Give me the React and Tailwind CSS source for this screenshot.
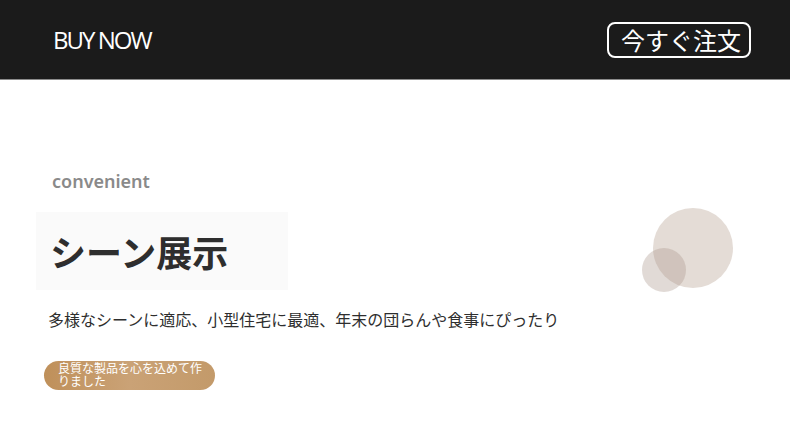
import React from "react";

export default function App() {
  const jp = { fontFamily: '"Noto Sans CJK JP", "Noto Sans", sans-serif' };
  return (
    <div className="w-[790px] h-[441px] bg-white overflow-hidden relative" style={jp}>
      <header className="h-[80px] bg-[#1b1b1b] border-b border-[#8c8c8c] flex items-center justify-between pl-[53px] pr-[39px]">
        <div
          className="text-white text-[24px] tracking-[-2px] leading-none"
          style={{ fontFamily: '"Open Sans", sans-serif' }}
        >
          BUY NOW
        </div>
        <div className="w-[144px] h-[36px] border-2 border-white rounded-[8px] flex items-center justify-center pl-[4px] text-white text-[24px] leading-none">
          今すぐ注文
        </div>
      </header>

      <main className="relative pt-[89px]">
        <div
          className="pl-[52px] text-[18px] leading-[24px] font-semibold text-[#8a8a8a]"
          style={{ fontFamily: '"Noto Sans", sans-serif' }}
        >
          convenient
        </div>
        <div className="mt-[19px] ml-[36px] w-[252px] h-[78px] bg-[#fafafa] flex items-center pl-[14px]">
          <h1 className="text-[36px] font-bold text-[#2e2e2e] leading-none">シーン展示</h1>
        </div>
        <p className="mt-[17px] pl-[48px] text-[16px] leading-[24px] text-[#2e2e2e]">
          多様なシーンに適応、小型住宅に最適、年末の団らんや食事にぴったり
        </p>
        <div className="mt-[30px] ml-[44px] w-[171px] h-[29px] rounded-full bg-gradient-to-r from-[#bf905a] via-[#caa276] to-[#c39a6a] pl-[14px] pr-[10px] text-white text-[12px] leading-[13px] overflow-visible">
          良質な製品を心を込めて作りました
        </div>

        <div className="absolute left-[653px] top-[128px] w-[80px] h-[80px] rounded-full bg-[#e4dcd6]" />
        <div className="absolute left-[642px] top-[168px] w-[44px] h-[44px] rounded-full bg-[#ac988c]/[0.36]" />
      </main>
    </div>
  );
}
